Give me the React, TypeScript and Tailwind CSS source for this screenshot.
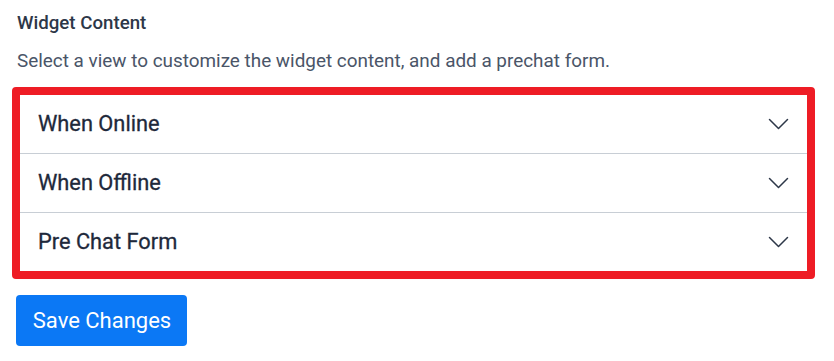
import React from 'react';

const sections = ['When Online', 'When Offline', 'Pre Chat Form'];

const Chevron = () => (
  <svg width="21" height="12" viewBox="0 0 21 12" fill="none" className="text-[#2d3748]">
    <path d="M1.5 1.5l9 9 9-9" stroke="currentColor" strokeWidth="1.5" strokeLinecap="round" strokeLinejoin="round" />
  </svg>
);

export default function App() {
  return (
    <div className="min-h-[361px] bg-white px-4 pt-[9px] font-['Roboto',sans-serif] text-[#2d3748]">
      <h3 className="pl-px text-[18.7px] font-medium leading-7">Widget Content</h3>
      <p className="mt-[10px] pl-px text-[18.9px] leading-7 text-[#4a5568]">
        Select a view to customize the widget content, and add a prechat form.
      </p>
      <div className="mt-[12px] -ml-1 w-[803px] rounded-[4px] border-8 border-[#ee1c25]">
        {sections.map((title, idx) => (
          <div
            key={title}
            className={idx > 0 ? 'flex h-[59px] items-center justify-between border-t border-[#c8ced5] pl-[18px] pr-[18px]' : 'flex h-[58px] items-center justify-between pl-[18px] pr-[18px]'}
          >
            <span className="text-[21.8px] text-[#1e293b] [-webkit-text-stroke:0.3px_#1e293b]">{title}</span>
            <Chevron />
          </div>
        ))}
      </div>
      <button className="mt-[16px] h-[51px] w-[171px] rounded-[4px] bg-[#0b78f5] pl-px text-[22px] text-white">
        Save Changes
      </button>
    </div>
  );
}
